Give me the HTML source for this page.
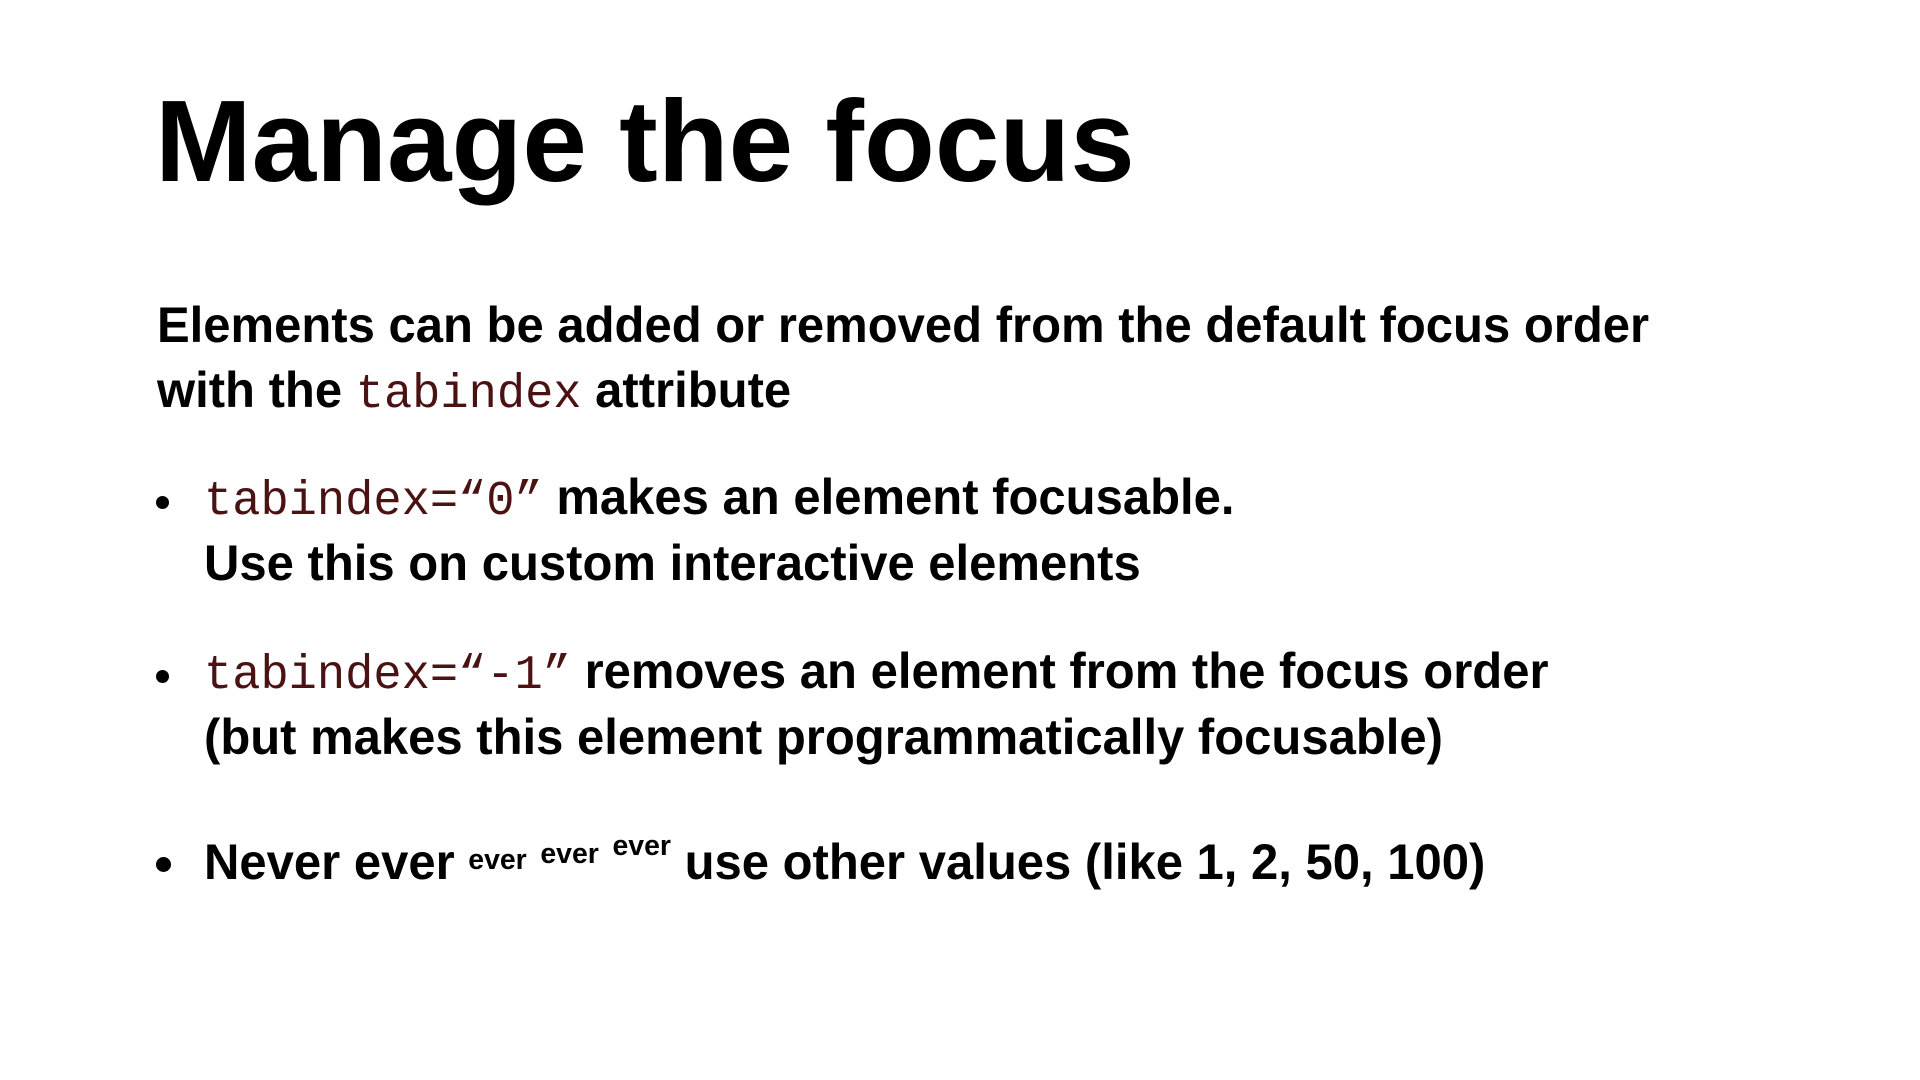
<!DOCTYPE html>
<html><head><meta charset="utf-8"><style>
html,body{margin:0;padding:0;background:#fff;}
body{width:1920px;height:1080px;position:relative;overflow:hidden;font-family:"Liberation Sans",sans-serif;color:#000;}
.l{position:absolute;left:157px;white-space:nowrap;font-weight:bold;font-size:50px;line-height:1;transform-origin:0 0;transform:scaleX(0.98);}
.t{font-size:116px;font-weight:900;left:155px;top:83px;letter-spacing:0;transform:none;}
code{font-family:"Liberation Mono",monospace;color:#4a1212;font-weight:normal;font-size:48px;}
.b{left:204px;}
.dot{position:absolute;left:156px;width:13px;height:13px;border-radius:50%;background:#000;}
sup{font-size:29px;vertical-align:baseline;position:relative;}
</style></head><body>
<div class="l t">Manage the focus</div>
<div class="l" style="top:300px">Elements can be added or removed from the default focus order</div>
<div class="l" style="top:365px">with the <code>tabindex</code> attribute</div>

<div class="dot" style="top:496px"></div>
<div class="l b" style="top:472px"><code>tabindex=“0”</code> makes an element focusable.</div>
<div class="l b" style="top:538px">Use this on custom interactive elements</div>

<div class="dot" style="top:670px"></div>
<div class="l b" style="top:646px"><code>tabindex=“-1”</code> removes an element from the focus order</div>
<div class="l b" style="top:712px">(but makes this element programmatically focusable)</div>

<div class="dot" style="top:857px;width:15px;height:15px"></div>
<div class="l b" style="top:837px">Never ever <sup style="top:-10px">ever</sup> <sup style="top:-16px">ever</sup> <sup style="top:-24px">ever</sup> use other values (like 1, 2, 50, 100)</div>
</body></html>
